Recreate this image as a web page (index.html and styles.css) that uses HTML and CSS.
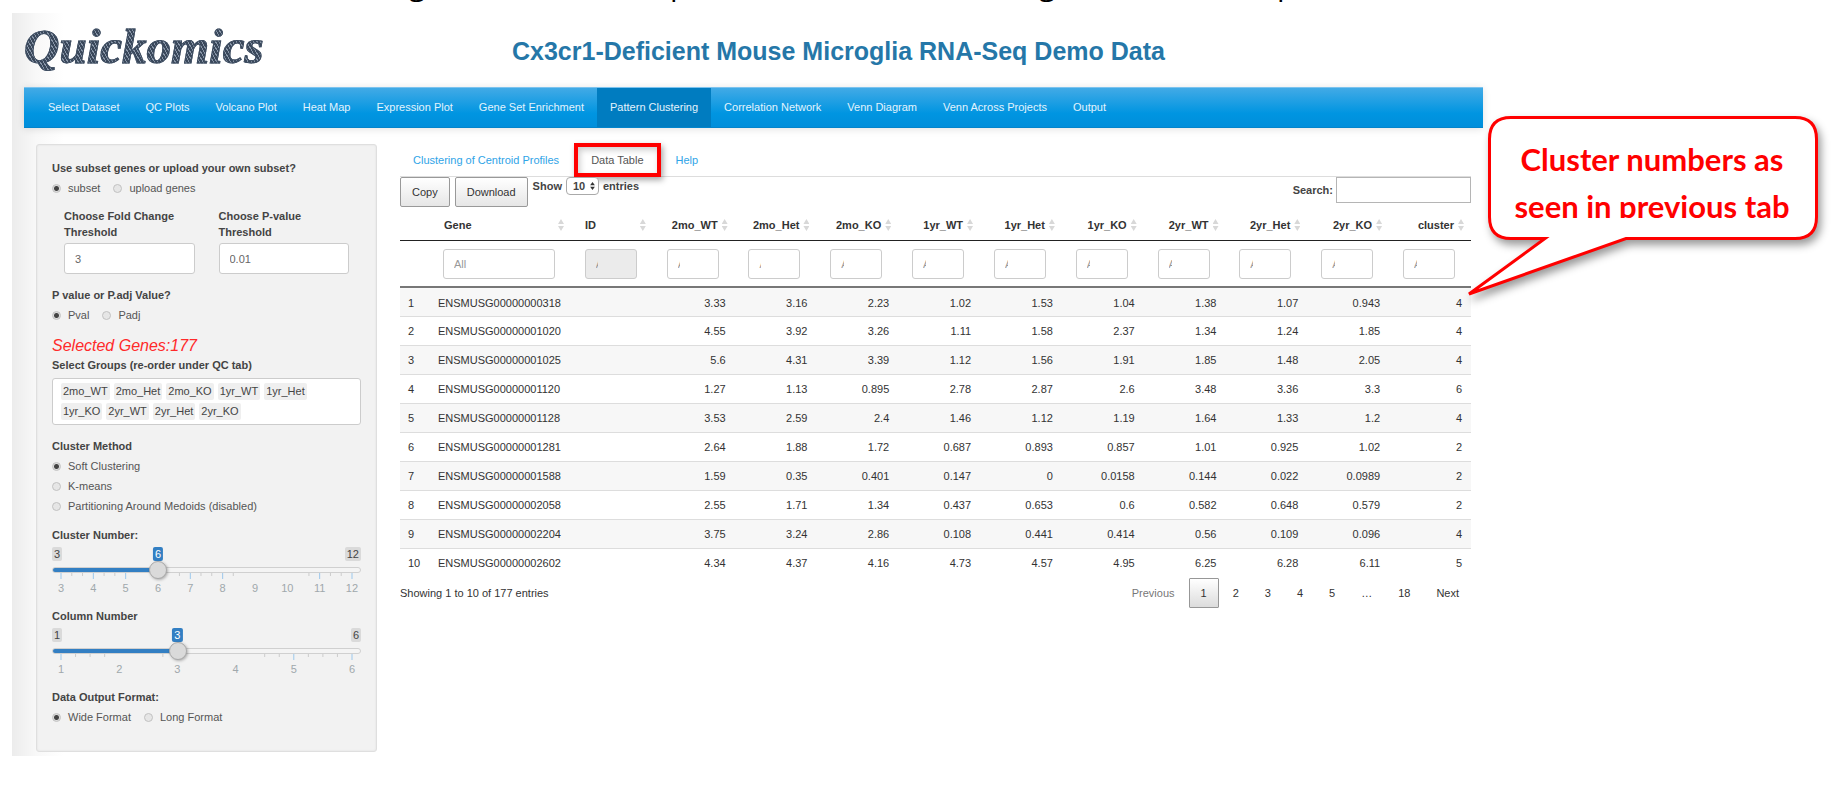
FILE: index.html
```html
<!DOCTYPE html>
<html lang="en">
<head>
<meta charset="utf-8">
<title>Quickomics</title>
<link rel="stylesheet" href="styles.css">
</head>
<body>
<div class="page">
<div class="caption" aria-hidden="true"><span>g</span><span>p</span><span>,</span><span>g</span><span>p</span></div>
<div class="app">
  <header class="header">
    <div class="logo">Quickomics</div>
    <h1 class="title">Cx3cr1-Deficient Mouse Microglia RNA-Seq Demo Data</h1>
  </header>
  <nav class="navbar">
    <a href="#">Select Dataset</a><a href="#">QC Plots</a><a href="#">Volcano Plot</a><a href="#">Heat Map</a><a href="#">Expression Plot</a><a href="#">Gene Set Enrichment</a><a href="#" class="active">Pattern Clustering</a><a href="#">Correlation Network</a><a href="#">Venn Diagram</a><a href="#">Venn Across Projects</a><a href="#">Output</a>
  </nav>
  <div class="body">
    <form class="sidebar">
      <div class="heading">Use subset genes or upload your own subset?</div>
      <div class="radios">
        <label><input type="radio" name="subset" checked>subset</label>
        <label><input type="radio" name="subset">upload genes</label>
      </div>
      <div class="thresholds">
        <div><label for="fc">Choose Fold Change Threshold</label><input id="fc" type="text" value="3"></div>
        <div><label for="pv">Choose P-value Threshold</label><input id="pv" type="text" value="0.01"></div>
      </div>
      <div class="heading gap-m">P value or P.adj Value?</div>
      <div class="radios">
        <label><input type="radio" name="ptype" checked>Pval</label>
        <label><input type="radio" name="ptype">Padj</label>
      </div>
      <div class="selected">Selected Genes:177</div>
      <div class="heading">Select Groups (re-order under QC tab)</div>
      <div class="tags"><span>2mo_WT</span><span>2mo_Het</span><span>2mo_KO</span><span>1yr_WT</span><span>1yr_Het</span><span>1yr_KO</span><span>2yr_WT</span><span>2yr_Het</span><span>2yr_KO</span></div>
      <div class="heading gap-l">Cluster Method</div>
      <div class="radios stacked">
        <label><input type="radio" name="method" checked>Soft Clustering</label>
        <label><input type="radio" name="method">K-means</label>
        <label><input type="radio" name="method">Partitioning Around Medoids (disabled)</label>
      </div>
      <label class="heading gap-m" for="clusters">Cluster Number:</label>
      <div class="slider" style="--pos:0.3333">
        <div class="bounds"><span>3</span><span>12</span></div>
        <output class="value" for="clusters">6</output>
        <input id="clusters" type="range" min="3" max="12" value="6">
        <svg class="ticks" aria-hidden="true">
          <g class="major"><line x1="0%" x2="0%" y2="6"/><line x1="11.11%" x2="11.11%" y2="6"/><line x1="22.22%" x2="22.22%" y2="6"/><line x1="33.33%" x2="33.33%" y2="6"/><line x1="44.44%" x2="44.44%" y2="6"/><line x1="55.55%" x2="55.55%" y2="6"/><line x1="88.88%" x2="88.88%" y2="6"/><line x1="100%" x2="100%" y2="6"/></g>
          <g class="minor"><line x1="3.7%" x2="3.7%" y2="3"/><line x1="7.4%" x2="7.4%" y2="3"/><line x1="14.8%" x2="14.8%" y2="3"/><line x1="18.5%" x2="18.5%" y2="3"/><line x1="40.7%" x2="40.7%" y2="3"/><line x1="48.1%" x2="48.1%" y2="3"/><line x1="51.8%" x2="51.8%" y2="3"/><line x1="59.2%" x2="59.2%" y2="3"/><line x1="85.2%" x2="85.2%" y2="3"/><line x1="92.6%" x2="92.6%" y2="3"/><line x1="96.3%" x2="96.3%" y2="3"/></g>
        </svg>
        <div class="scale"><span>3</span><span>4</span><span>5</span><span>6</span><span>7</span><span>8</span><span>9</span><span>10</span><span>11</span><span>12</span></div>
      </div>
      <label class="heading gap-m" for="columns">Column Number</label>
      <div class="slider" style="--pos:0.4">
        <div class="bounds"><span>1</span><span>6</span></div>
        <output class="value" for="columns">3</output>
        <input id="columns" type="range" min="1" max="6" value="3">
        <svg class="ticks" aria-hidden="true">
          <g class="major"><line x1="0%" x2="0%" y2="6"/><line x1="40%" x2="40%" y2="6"/><line x1="80%" x2="80%" y2="6"/><line x1="100%" x2="100%" y2="6"/></g>
          <g class="minor"><line x1="5%" x2="5%" y2="3"/><line x1="10%" x2="10%" y2="3"/><line x1="15%" x2="15%" y2="3"/><line x1="35%" x2="35%" y2="3"/><line x1="70%" x2="70%" y2="3"/><line x1="75%" x2="75%" y2="3"/><line x1="85%" x2="85%" y2="3"/><line x1="90%" x2="90%" y2="3"/><line x1="95%" x2="95%" y2="3"/></g>
        </svg>
        <div class="scale"><span>1</span><span>2</span><span>3</span><span>4</span><span>5</span><span>6</span></div>
      </div>
      <div class="heading gap-m">Data Output Format:</div>
      <div class="radios">
        <label><input type="radio" name="format" checked>Wide Format</label>
        <label><input type="radio" name="format">Long Format</label>
      </div>
    </form>
    <main class="main">
      <div class="tabs"><a href="#">Clustering of Centroid Profiles</a><a href="#" class="current">Data Table</a><a href="#">Help</a></div>
      <div class="toolbar">
        <button type="button">Copy</button>
        <button type="button">Download</button>
        <label class="length">Show <span class="picker"><select><option>10</option></select><svg viewBox="0 0 6 10" aria-hidden="true"><path d="M3 0 6 4H0zM3 10 0 6h6z"/></svg></span> entries</label>
        <label class="search">Search:<input type="search"></label>
      </div>
      <table class="grid">
        <colgroup><col class="c-num"><col class="c-gene"><col span="11"></colgroup>
        <thead>
          <tr class="names"><th></th><th class="left"><div>Gene<i></i></div></th><th class="left"><div>ID<i></i></div></th><th><div>2mo_WT<i></i></div></th><th><div>2mo_Het<i></i></div></th><th><div>2mo_KO<i></i></div></th><th><div>1yr_WT<i></i></div></th><th><div>1yr_Het<i></i></div></th><th><div>1yr_KO<i></i></div></th><th><div>2yr_WT<i></i></div></th><th><div>2yr_Het<i></i></div></th><th><div>2yr_KO<i></i></div></th><th><div>cluster<i></i></div></th></tr>
          <tr class="filters"><td></td><td><input class="wide" type="text" placeholder="All" aria-label="Gene"></td><td><input class="short" type="text" placeholder="All" aria-label="ID" disabled></td><td><input class="short" type="text" placeholder="All" aria-label="2mo_WT"></td><td><input class="short" type="text" placeholder="All" aria-label="2mo_Het"></td><td><input type="text" placeholder="All" aria-label="2mo_KO"></td><td><input type="text" placeholder="All" aria-label="1yr_WT"></td><td><input type="text" placeholder="All" aria-label="1yr_Het"></td><td><input type="text" placeholder="All" aria-label="1yr_KO"></td><td><input type="text" placeholder="All" aria-label="2yr_WT"></td><td><input type="text" placeholder="All" aria-label="2yr_Het"></td><td><input type="text" placeholder="All" aria-label="2yr_KO"></td><td><input type="text" placeholder="All" aria-label="cluster"></td></tr>
        </thead>
        <tbody>
          <tr><td>1</td><td>ENSMUSG00000000318</td><td></td><td>3.33</td><td>3.16</td><td>2.23</td><td>1.02</td><td>1.53</td><td>1.04</td><td>1.38</td><td>1.07</td><td>0.943</td><td>4</td></tr>
          <tr><td>2</td><td>ENSMUSG00000001020</td><td></td><td>4.55</td><td>3.92</td><td>3.26</td><td>1.11</td><td>1.58</td><td>2.37</td><td>1.34</td><td>1.24</td><td>1.85</td><td>4</td></tr>
          <tr><td>3</td><td>ENSMUSG00000001025</td><td></td><td>5.6</td><td>4.31</td><td>3.39</td><td>1.12</td><td>1.56</td><td>1.91</td><td>1.85</td><td>1.48</td><td>2.05</td><td>4</td></tr>
          <tr><td>4</td><td>ENSMUSG00000001120</td><td></td><td>1.27</td><td>1.13</td><td>0.895</td><td>2.78</td><td>2.87</td><td>2.6</td><td>3.48</td><td>3.36</td><td>3.3</td><td>6</td></tr>
          <tr><td>5</td><td>ENSMUSG00000001128</td><td></td><td>3.53</td><td>2.59</td><td>2.4</td><td>1.46</td><td>1.12</td><td>1.19</td><td>1.64</td><td>1.33</td><td>1.2</td><td>4</td></tr>
          <tr><td>6</td><td>ENSMUSG00000001281</td><td></td><td>2.64</td><td>1.88</td><td>1.72</td><td>0.687</td><td>0.893</td><td>0.857</td><td>1.01</td><td>0.925</td><td>1.02</td><td>2</td></tr>
          <tr><td>7</td><td>ENSMUSG00000001588</td><td></td><td>1.59</td><td>0.35</td><td>0.401</td><td>0.147</td><td>0</td><td>0.0158</td><td>0.144</td><td>0.022</td><td>0.0989</td><td>2</td></tr>
          <tr><td>8</td><td>ENSMUSG00000002058</td><td></td><td>2.55</td><td>1.71</td><td>1.34</td><td>0.437</td><td>0.653</td><td>0.6</td><td>0.582</td><td>0.648</td><td>0.579</td><td>2</td></tr>
          <tr><td>9</td><td>ENSMUSG00000002204</td><td></td><td>3.75</td><td>3.24</td><td>2.86</td><td>0.108</td><td>0.441</td><td>0.414</td><td>0.56</td><td>0.109</td><td>0.096</td><td>4</td></tr>
          <tr><td>10</td><td>ENSMUSG00000002602</td><td></td><td>4.34</td><td>4.37</td><td>4.16</td><td>4.73</td><td>4.57</td><td>4.95</td><td>6.25</td><td>6.28</td><td>6.11</td><td>5</td></tr>
        </tbody>
      </table>
      <div class="footer">
        <div class="info">Showing 1 to 10 of 177 entries</div>
        <div class="pages"><a href="#" class="muted">Previous</a><a href="#" class="on">1</a><a href="#">2</a><a href="#">3</a><a href="#">4</a><a href="#">5</a><span>…</span><a href="#">18</a><a href="#">Next</a></div>
      </div>
    </main>
  </div>
</div>
<aside class="callout">
  <svg viewBox="0 0 365 200" aria-hidden="true"><path d="M50 7.500H334Q355.500 7.500 355.500 29V107Q355.500 128.500 334 128.500H165L8 184 84 128.500H50Q28.500 128.500 28.500 107V29Q28.500 7.500 50 7.500Z"/></svg>
  <p>Cluster numbers as<br>seen in previous tab</p>
</aside>
</div>
</body>
</html>
```
FILE: styles.css
```css
* { box-sizing: border-box; }
body {
  margin: 0;
  background: #fff;
  color: #444;
  font: 11px/16px "Liberation Sans", Arial, sans-serif;
}
a { text-decoration: none; }
input, select, button { font: inherit; color: inherit; margin: 0; }
.page { position: relative; padding: 0 350px 0 12px; }

/* Tail of the paragraph that scrolls out above the figure */
.caption {
  display: grid;
  grid-template-columns: 261px 279px 90px 238px auto;
  height: 13px;
  padding-left: 397px;
  overflow: hidden;
  color: #000;
  font: 30px/34px "Open Sans", sans-serif;
}
.caption span { margin-top: -33px; }

.app {
  padding: 0 0 4px 12px;
  background: linear-gradient(90deg, #ececec, #f8f8f8 24px, #fff 52px);
}
.header { display: grid; grid-template-columns: 488px 1fr; height: 74px; }
.logo {
  padding-top: 5px;
  width: 250px;
  font: italic bold 49px/58px "Liberation Serif", serif;
  color: transparent;
  background: repeating-linear-gradient(60deg, #3a485b 0 2px, #8794a6 2px 3px);
  background-clip: text;
  -webkit-background-clip: text;
  -webkit-text-stroke: 1px #3f4e62;
}
.title {
  margin: 0;
  padding-top: 22px;
  color: #2577a8;
  font-size: 25px;
  line-height: 32px;
  white-space: nowrap;
}
.navbar {
  display: flex;
  height: 41px;
  padding-left: 11px;
  background: linear-gradient(#42aae6, #0095e1 65%, #008edb);
  border-top: 1px solid #7cc3ee;
  border-bottom: 1px solid #0384cb;
  box-shadow: 0 1px 8px rgba(0, 0, 0, .12);
}
.navbar a { padding: 11px 13px; color: #e3f3fd; white-space: nowrap; }
.navbar .active { background: #007cc0; }

.body {
  display: grid;
  grid-template-columns: 341px 1fr;
  gap: 23px;
  padding: 16px 12px 0 12px;
  align-items: start;
}
.sidebar {
  padding: 15px 15px 26px;
  border: 1px solid #dfdfdf;
  border-radius: 3px;
  background: #f2f2f2;
  box-shadow: inset 0 0 2px #ddd;
}
.heading { display: block; font-weight: bold; }
.gap-m { margin-top: 13px; }
.gap-l { margin-top: 13px; }
.radios { display: flex; gap: 13px; margin-top: 4px; color: #555; }
.radios label { display: flex; align-items: center; gap: 7px; }
.radios.stacked { flex-direction: column; gap: 4px; }
.radios input {
  appearance: none;
  width: 9px;
  height: 9px;
  border: 1px solid #c2c2c2;
  border-radius: 50%;
  background: #e6e6e6;
}
.radios input:checked { background: radial-gradient(circle, #444 0 2px, #ddd 3px); }
.thresholds {
  display: grid;
  grid-template-columns: 1fr 1fr;
  gap: 24px;
  margin: 12px 12px 0;
}
.thresholds label { display: block; width: 110px; font-weight: bold; }
.thresholds input {
  width: 100%;
  height: 31px;
  margin-top: 3px;
  padding: 0 10px;
  border: 1px solid #ccc;
  border-radius: 3px;
  background: #fff;
  color: #666;
}
.selected { margin: 13px 0 1px; color: #ff2a2a; font: italic 16px/20px "Liberation Sans", Arial, sans-serif; }
.tags {
  display: flex;
  flex-wrap: wrap;
  gap: 3px 4px;
  margin-top: 5px;
  padding: 4px 20px 4px 8px;
  border: 1px solid #ccc;
  border-radius: 3px;
  background: #fff;
}
.tags span { padding: 0 2px; border-radius: 2px; background: #efefef; line-height: 17px; }

.slider { position: relative; margin-top: 4px; }
.bounds { display: flex; justify-content: space-between; }
.bounds span, .value {
  padding: 0 2px;
  border-radius: 2px;
  background: #dadada;
  line-height: 14px;
}
.value {
  position: absolute;
  top: 0;
  left: calc(9px + (100% - 18px) * var(--pos));
  transform: translateX(-50%);
  background: #337fc3;
  color: #fff;
}
.slider input {
  display: block;
  appearance: none;
  position: relative;
  z-index: 1;
  width: 100%;
  height: 18px;
  background: none;
}
.slider input::-webkit-slider-runnable-track {
  height: 6px;
  border: 1px solid #d0d0d0;
  border-radius: 3px;
  background: linear-gradient(90deg, #337fc3 calc(100% * var(--pos)), #f4f4f4 0) border-box;
}
.slider input::-webkit-slider-thumb {
  appearance: none;
  width: 18px;
  height: 18px;
  margin-top: -7px;
  border: 1px solid #aaa;
  border-radius: 50%;
  background: #dadada;
  box-shadow: 1px 1px 3px rgba(0, 0, 0, .3);
}
.ticks { display: block; width: calc(100% - 18px); height: 7px; margin: -6px 9px 0; overflow: visible; }
.major { stroke: #9cc8ec; }
.minor { stroke: #ccc; }
.scale { display: flex; justify-content: space-between; padding-top: 1px; color: #a0a8ac; line-height: 14px; }
.scale span { width: 18px; text-align: center; }

.tabs { display: flex; gap: 6px; height: 33px; border-bottom: 1px solid #ddd; }
.tabs a { padding: 8px 13px; color: #2fa4e7; }
.tabs .current {
  position: relative;
  color: #555;
}
.tabs .current::after {
  content: "";
  position: absolute;
  inset: -1px -4px -1px -4px;
  border: 4px solid #f00;
  box-shadow: 2px 3px 6px rgba(0, 0, 0, .35), inset 2px 3px 6px rgba(0, 0, 0, .2);
}
.toolbar { display: flex; align-items: flex-start; height: 33px; }
.toolbar button {
  height: 30px;
  margin-right: 5px;
  padding: 0 11px;
  border: 1px solid #999;
  border-radius: 2px;
  background: linear-gradient(#fff, #e6e6e6);
  color: #333;
}
.length { display: flex; align-items: center; gap: 4px; height: 18px; font-weight: bold; white-space: nowrap; }
.picker { position: relative; }
.picker select {
  display: block;
  appearance: none;
  width: 33px;
  height: 18px;
  padding: 0 6px;
  border: 1px solid #aaa;
  border-radius: 4px;
  background: #fff;
}
.picker svg { position: absolute; right: 4px; top: 5px; width: 5px; height: 8px; fill: #333; }
.search { display: flex; align-items: center; gap: 3px; margin-left: auto; font-weight: bold; }
.search input { width: 135px; height: 26px; border: 1px solid #b5b5b5; background: #fff; }

.grid { width: 100%; table-layout: fixed; border-collapse: separate; border-spacing: 0; color: #333; }
.c-num { width: 30px; }
.c-gene { width: 141px; }
.grid th, .grid td { padding: 0; }
.names th { height: 31px; border-bottom: 1px solid #222; }
.names div { display: flex; align-items: center; justify-content: flex-end; gap: 4px; padding-right: 7px; }
.names .left div { justify-content: space-between; padding-left: 14px; }
.names i {
  width: 6px;
  height: 12px;
  background: #d8d8d8;
  clip-path: polygon(50% 0, 100% 42%, 0 42%, 0 58%, 100% 58%, 50% 100%, 0 58%, 0 42%);
}
.filters td { height: 47px; border-bottom: 2px solid #777; }
.filters input {
  display: block;
  width: 52px;
  height: 30px;
  margin-left: auto;
  margin-right: 16px;
  padding: 0 37px 0 10px;
  border: 1px solid #ccc;
  border-radius: 3px;
  background: #fff;
}
.filters .short { padding-right: 38px; }
.filters .wide { width: 112px; padding-right: 10px; }
.filters input:disabled { background: #ebebeb; }
.filters input::placeholder { color: #999; }
.grid tbody td { height: 29px; padding: 0 9px; border-top: 1px solid #ddd; text-align: right; }
.grid tbody tr:first-child td { height: 28px; border-top-color: #f9f9f9; }
.grid tbody tr:nth-child(odd) { background: #f7f7f7; }
.grid tbody td:first-child, .grid tbody td:nth-child(2) { padding: 0 8px; text-align: left; }

.footer { display: flex; justify-content: space-between; padding-top: 1px; color: #333; }
.info { padding-top: 7px; }
.pages { display: flex; gap: 2px; }
.pages > * { padding: 7px 12px; color: #333; }
.pages .muted { color: #777; }
.pages .on { padding: 6px 11px; border: 1px solid #979797; border-radius: 1px; background: linear-gradient(#fff, #dcdcdc); }

.callout { position: absolute; top: 110px; right: 7px; width: 365px; }
.callout svg { display: block; filter: drop-shadow(3px 5px 4px rgba(0, 0, 0, .4)); }
.callout path { fill: #fff; stroke: #f00; stroke-width: 3; }
.callout p {
  position: absolute;
  top: 26px;
  left: 25px;
  right: 8px;
  height: 82px;
  margin: 0;
  overflow: hidden;
  color: #f00;
  text-align: center;
  white-space: nowrap;
  font: bold 31px/47px Lato, sans-serif;
}
```
